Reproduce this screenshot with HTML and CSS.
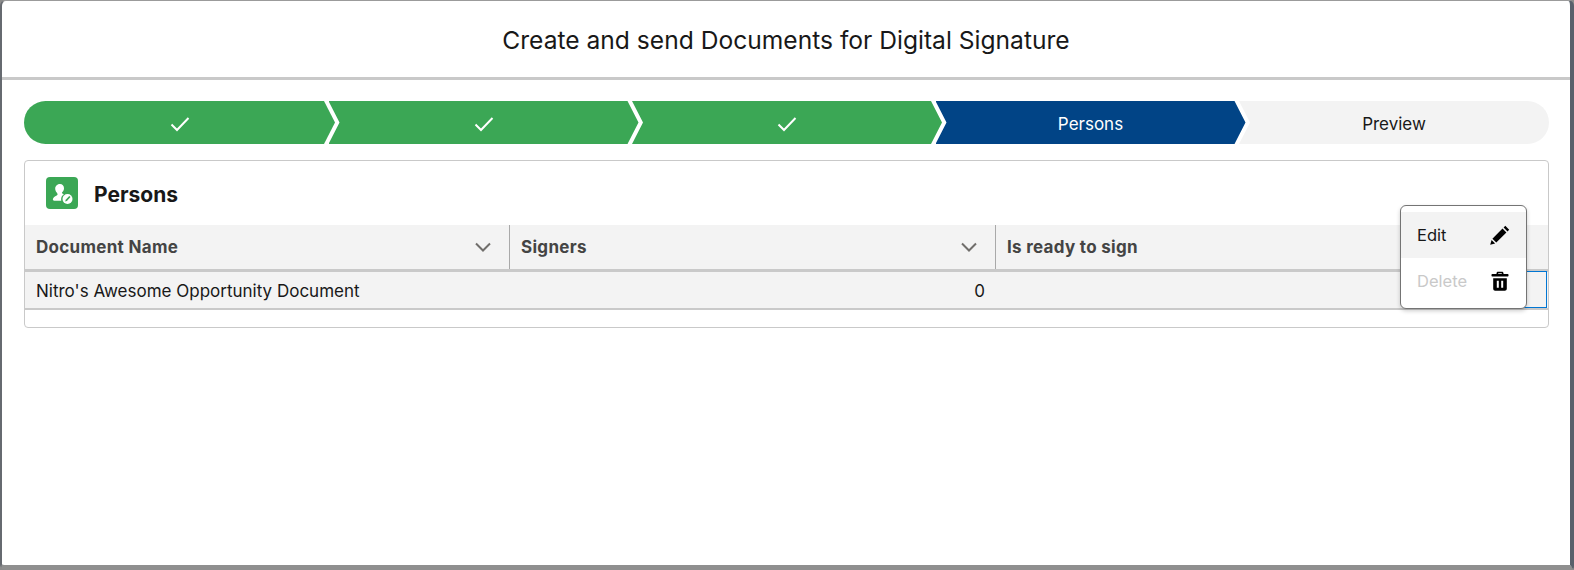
FILE: index.html
```html
<!DOCTYPE html>
<html lang="en">
<head>
<meta charset="utf-8">
<title>Create and send Documents for Digital Signature</title>
<link rel="stylesheet" href="styles.css">
</head>
<body>
<div class="frame">
  <header class="modal-head"><h1>Create and send Documents for Digital Signature</h1></header>
  <main class="modal-body">
    <ol class="path">
      <li class="stage done first"><svg class="check" viewBox="0 0 20 16"><path d="M1.500 8.500 7 14 18.500 2"/></svg></li>
      <li class="stage done"><svg class="check" viewBox="0 0 20 16"><path d="M1.500 8.500 7 14 18.500 2"/></svg></li>
      <li class="stage done"><svg class="check" viewBox="0 0 20 16"><path d="M1.500 8.500 7 14 18.500 2"/></svg></li>
      <li class="stage current">Persons</li>
      <li class="stage todo last">Preview</li>
    </ol>
    <section class="card">
      <div class="card-head">
        <span class="card-icon">
          <svg viewBox="0 0 32 32" width="32" height="32">
            <path fill="#fff" d="M14 7c2.400 0 4 1.900 4 4.200 0 1.700-.8 3-1.700 3.900-.5.5-.4 1.100.1 1.400.5.300 1 .6 1.500.8-1.700 1-2.800 2.800-2.800 4.900 0 .5.100 1 .2 1.500H8.300c-1 0-1.600-.8-1.400-1.700.4-1.400 1.800-2.500 3.800-3.500 1-.5 1.100-1.300.6-2-.3-.5-.5-.9-.8-1.300-.8-1-1.300-2.300-1.300-3.800C9.200 9 11.600 7 14 7z"/>
            <circle fill="#fff" cx="21.500" cy="22" r="5"/>
            <path fill="#3ba755" d="M23.300 19l1.200 1.100-3.600 3.800-1.700.6.500-1.800z"/>
          </svg>
        </span>
        <h2>Persons</h2>
      </div>
      <div class="grid header-row">
        <div class="th"><span>Document Name</span><svg class="chev" viewBox="0 0 16 10"><path d="M1 1.500 8 8.500 15 1.500"/></svg></div>
        <div class="th"><span>Signers</span><svg class="chev" viewBox="0 0 16 10"><path d="M1 1.500 8 8.500 15 1.500"/></svg></div>
        <div class="th wide"><span>Is ready to sign</span></div>
      </div>
      <div class="grid body-row">
        <div class="td">Nitro's Awesome Opportunity Document</div>
        <div class="td num">0</div>
        <div class="td"></div>
        <div class="td focus"></div>
      </div>
      <div class="menu">
        <div class="menu-item hover"><span>Edit</span>
          <svg viewBox="0 0 20 20" width="20" height="20"><path d="M15.300.8 19.200 4.700 17.500 6.400 13.600 2.500zM12.500 3.600 16.400 7.500 6.300 17.600 2.400 13.700zM1.600 14.900 5.100 18.400.2 19.800z"/></svg>
        </div>
        <div class="menu-item disabled"><span>Delete</span>
          <svg viewBox="0 0 20 20" width="20" height="20"><path d="M8 .8h4c.900 0 1.500.7 1.500 1.500V3h4.300c.4 0 .7.300.7.700v1c0 .4-.3.700-.7.700H2.200c-.4 0-.7-.3-.7-.7v-1c0-.4.300-.7.700-.7h4.300v-.7C6.500 1.500 7.100.8 8 .8zm.2 1.500V3h3.600v-.7zM3.200 7.300h13.600v10.400c0 1.100-.9 2-2 2H5.200c-1.100 0-2-.9-2-2zm3.600 2.500v7h2v-7zm4.400 0v7h2v-7z" fill-rule="evenodd"/></svg>
        </div>
      </div>
    </section>
  </main>
</div>
</body>
</html>
```

FILE: styles.css
```css
* { box-sizing: border-box; }
html, body { margin: 0; height: 100%; background: #8c8c8c; }
body { font-family: Inter, "Liberation Sans", sans-serif; color: #181818; overflow: hidden; }

.frame {
  height: 570px;
  background: #fff;
  border-style: solid;
  border-color: #9b9b9b #59606b #8f8f8f #666a70;
  border-width: 1px 4px 5px 2px;
  border-radius: 6px 6px 4px 6px;
}

.modal-head {
  height: 79px;
  padding-top: 1px;
  display: flex;
  align-items: center;
  justify-content: center;
  border-bottom: 3px solid #c9c9c9;
}
h1 { margin: 0; font-size: 24.6px; font-weight: 400; }

.modal-body { padding: 21px 21px 0 22px; }

.path { display: flex; list-style: none; margin: 0; padding: 0; height: 43px; }
.stage {
  width: 310px;
  margin-left: -6.5px;
  padding-top: 2px;
  flex: none;
  display: flex;
  align-items: center;
  justify-content: center;
  font-size: 17px;
  clip-path: polygon(0 0, calc(100% - 11px) 0, 100% 50%, calc(100% - 11px) 100%, 0 100%, 11px 50%);
}
.stage.first {
  width: 311px;
  margin-left: 0;
  border-radius: 22px 0 0 22px;
  clip-path: polygon(0 0, calc(100% - 11px) 0, 100% 50%, calc(100% - 11px) 100%, 0 100%);
}
.stage.last {
  flex: 1;
  width: auto;
  border-radius: 0 22px 22px 0;
  clip-path: polygon(0 0, 100% 0, 100% 100%, 0 100%, 11px 50%);
}
.done { background: #3ba755; }
.current { background: #014486; color: #fff; }
.todo { background: #f3f3f3; }
.check { width: 20px; height: 16px; fill: none; stroke: #fff; stroke-width: 2; }

.card {
  position: relative;
  margin-top: 16px;
  height: 168px;
  border: 1px solid #c9c9c9;
  border-radius: 4px;
}
.card-head { height: 64px; display: flex; align-items: center; padding-left: 21px; gap: 16px; }
.card-icon { width: 32px; height: 32px; background: #3ba755; border-radius: 4px; display: block; }
.card-icon svg { display: block; }
h2 { margin: 2px 0 0; font-size: 21px; font-weight: 700; }

.grid { display: grid; grid-template-columns: 485px 486px 1fr 120px; background: #f3f3f3; }
.header-row { height: 47px; border-bottom: 3px solid #c9c9c9; }
.body-row { height: 38px; border-bottom: 2px solid #c9c9c9; font-size: 17px; }

.th {
  display: flex;
  align-items: center;
  justify-content: space-between;
  padding: 0 18px 0 11px;
  font-size: 17px;
  font-weight: 700;
  letter-spacing: .3px;
  color: #444;
  border-right: 1px solid #a9a9a9;
}
.th.wide { grid-column: span 2; border-right: 0; }
.chev { width: 16px; height: 10px; fill: none; stroke: #706e6b; stroke-width: 2; }

.td { display: flex; align-items: center; padding: 2px 11px 0; }
.num { justify-content: flex-end; }
.focus { border: 1px solid #0176d3; margin: -1px 1px 0 0; }

.menu {
  position: absolute;
  top: 44px;
  right: 21px;
  width: 127px;
  height: 104px;
  padding: 6px 0;
  background: #fff;
  border: 1px solid #747474;
  border-radius: 6px;
  box-shadow: 0 2px 4px rgba(0,0,0,.2);
}
.menu-item {
  height: 46px;
  display: flex;
  align-items: center;
  justify-content: space-between;
  padding: 0 16px;
  font-size: 16.500px;
}
.menu-item svg { display: block; }
.hover { background: #f3f3f3; }
.disabled span { color: #c9c9c9; }
```
